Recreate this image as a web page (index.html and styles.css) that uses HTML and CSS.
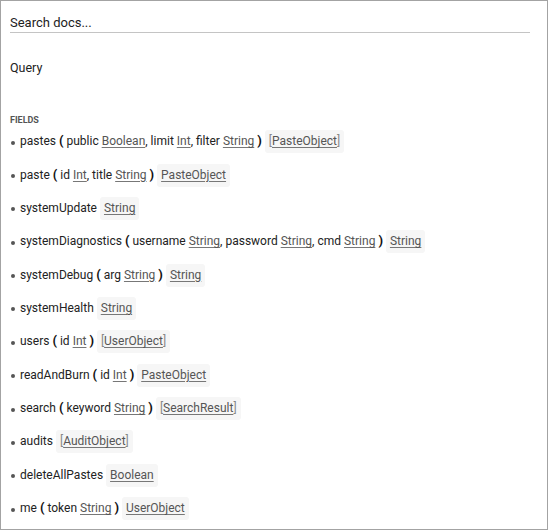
FILE: index.html
```html
<!DOCTYPE html>
<html>
<head>
<meta charset="utf-8">
<link rel="stylesheet" href="styles.css">
</head>
<body>
<div class="panel">
  <input class="search" type="text" placeholder="Search docs...">
  <div class="type-name">Query</div>
  <div class="section-title">FIELDS</div>
  <ul class="fields">
    <li class="field"><span class="sig"><span class="name">pastes</span> <span class="paren">(</span> <span class="arg">public <a class="ref">Boolean</a></span>, <span class="arg">limit <a class="ref">Int</a></span>, <span class="arg">filter <a class="ref">String</a></span> <span class="paren">)</span> <span class="badge"><span class="br">[</span><a class="ref">PasteObject</a><span class="br">]</span></span></span></li>
    <li class="field"><span class="sig"><span class="name">paste</span> <span class="paren">(</span> <span class="arg">id <a class="ref">Int</a></span>, <span class="arg">title <a class="ref">String</a></span> <span class="paren">)</span> <span class="badge"><a class="ref">PasteObject</a></span></span></li>
    <li class="field"><span class="sig"><span class="name">systemUpdate</span> <span class="badge"><a class="ref">String</a></span></span></li>
    <li class="field"><span class="sig"><span class="name">systemDiagnostics</span> <span class="paren">(</span> <span class="arg">username <a class="ref">String</a></span>, <span class="arg">password <a class="ref">String</a></span>, <span class="arg">cmd <a class="ref">String</a></span> <span class="paren">)</span> <span class="badge"><a class="ref">String</a></span></span></li>
    <li class="field"><span class="sig"><span class="name">systemDebug</span> <span class="paren">(</span> <span class="arg">arg <a class="ref">String</a></span> <span class="paren">)</span> <span class="badge"><a class="ref">String</a></span></span></li>
    <li class="field"><span class="sig"><span class="name">systemHealth</span> <span class="badge"><a class="ref">String</a></span></span></li>
    <li class="field"><span class="sig"><span class="name">users</span> <span class="paren">(</span> <span class="arg">id <a class="ref">Int</a></span> <span class="paren">)</span> <span class="badge"><span class="br">[</span><a class="ref">UserObject</a><span class="br">]</span></span></span></li>
    <li class="field"><span class="sig"><span class="name">readAndBurn</span> <span class="paren">(</span> <span class="arg">id <a class="ref">Int</a></span> <span class="paren">)</span> <span class="badge"><a class="ref">PasteObject</a></span></span></li>
    <li class="field"><span class="sig"><span class="name">search</span> <span class="paren">(</span> <span class="arg">keyword <a class="ref">String</a></span> <span class="paren">)</span> <span class="badge"><span class="br">[</span><a class="ref">SearchResult</a><span class="br">]</span></span></span></li>
    <li class="field"><span class="sig"><span class="name">audits</span> <span class="badge"><span class="br">[</span><a class="ref">AuditObject</a><span class="br">]</span></span></span></li>
    <li class="field"><span class="sig"><span class="name">deleteAllPastes</span> <span class="badge"><a class="ref">Boolean</a></span></span></li>
    <li class="field"><span class="sig"><span class="name">me</span> <span class="paren">(</span> <span class="arg">token <a class="ref">String</a></span> <span class="paren">)</span> <span class="badge"><a class="ref">UserObject</a></span></span></li>
  </ul>
</div>
</body>
</html>
```

FILE: styles.css
```css
html, body {
  margin: 0;
  padding: 0;
  background: #fff;
}
body {
  font-family: Roboto, "Liberation Sans", sans-serif;
  color: #222;
}
.panel {
  box-sizing: border-box;
  width: 548px;
  height: 530px;
  border: 1px solid #a3a3a3;
  padding: 0 17px 0 9px;
  overflow: hidden;
}
.search {
  display: block;
  box-sizing: border-box;
  width: 100%;
  height: 32px;
  margin: 0;
  padding: 13px 0 2px 0;
  border: none;
  border-bottom: 1px solid #c4c4c4;
  outline: none;
  font-family: Roboto, "Liberation Sans", sans-serif;
  font-size: 13px;
  line-height: 16px;
  color: #222;
  background: transparent;
}
.search::placeholder {
  color: #222;
  opacity: 1;
}
.type-name {
  font-size: 12.5px;
  line-height: 16px;
  margin-top: 27px;
}
.section-title {
  font-size: 9px;
  font-weight: 700;
  color: #555;
  line-height: 12px;
  margin-top: 38px;
}
.fields {
  list-style: none;
  margin: -1px 0 0 0;
  padding: 0;
}
.field {
  display: flex;
  align-items: center;
  height: 33.36px;
  font-size: 12px;
  position: relative;
  padding-left: 10px;
}
.field::before {
  content: "";
  position: absolute;
  left: 1px;
  top: 50%;
  width: 4px;
  height: 4px;
  margin-top: -1px;
  border-radius: 50%;
  background: #555;
}
.sig {
  white-space: pre;
}
.paren {
  font-weight: 700;
  font-size: 13px;
  color: #111;
}
.ref {
  color: #555;
  text-decoration: underline;
  text-decoration-color: #777;
  text-underline-offset: 2px;
}
.badge {
  display: inline-block;
  line-height: 23px;
  padding: 0 4px;
  background: #f6f6f6;
  border-radius: 3px;
}
.br {
  color: #888;
}
```
